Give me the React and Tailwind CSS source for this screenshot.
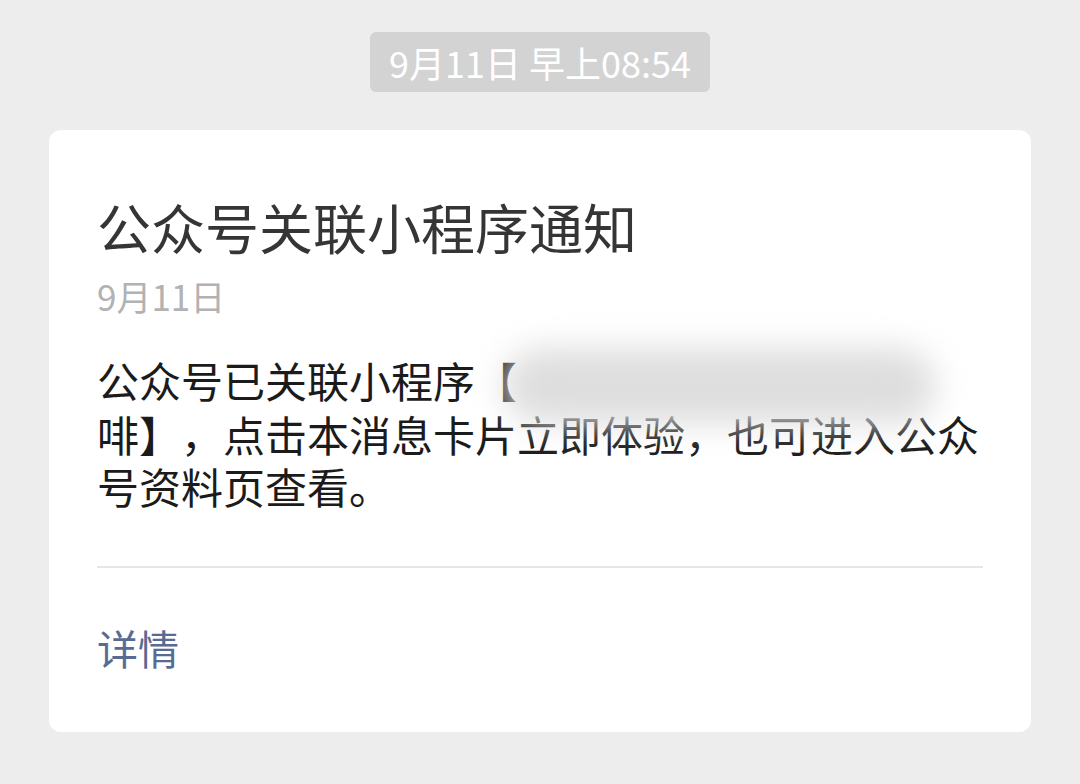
const font = { fontFamily: '"Noto Sans CJK SC", "Noto Sans", sans-serif' };

export default function App() {
  return (
    <div
      className="w-[1080px] h-[784px] bg-[#ededed] flex flex-col items-center pt-[32px] overflow-hidden"
      style={font}
    >
      <div className="h-[60px] px-[19px] rounded-[6px] bg-[#d3d3d3] text-white text-[36px] leading-[60px] flex items-center">
        9月11日 早上08:54
      </div>

      <div className="mt-[38px] w-[982px] self-start ml-[49px] bg-white rounded-[12px] px-[48px] pt-[56px] h-[602px] flex flex-col">
        <h1 className="text-[54px] leading-[82px] text-[#353535] font-normal">公众号关联小程序通知</h1>
        <div className="mt-[4px] text-[35px] leading-[48px] text-[#b2b2b2]">9月11日</div>

        <p className="mt-[34px] text-[42px] leading-[52px] text-[#1b1b1b] [text-spacing-trim:space-all]">
          公众号已关联小程序【
          <span className="relative inline-block w-[405px] h-[1em] align-middle">
            <span className="absolute -inset-x-[14px] -top-[18px] -bottom-[16px] rounded-full bg-[#dedede] blur-[16px]" />
          </span>
          <br />
          啡】，点击本消息卡片立即体验，也可进入公众号资料页查看。
        </p>

        <div className="mt-[54px] border-t-2 border-[#e6e6e6]" />

        <div className="flex-1 flex items-center pb-[6px]">
          <span className="text-[41px] leading-[56px] text-[#576b95]">详情</span>
        </div>
      </div>
    </div>
  );
}
